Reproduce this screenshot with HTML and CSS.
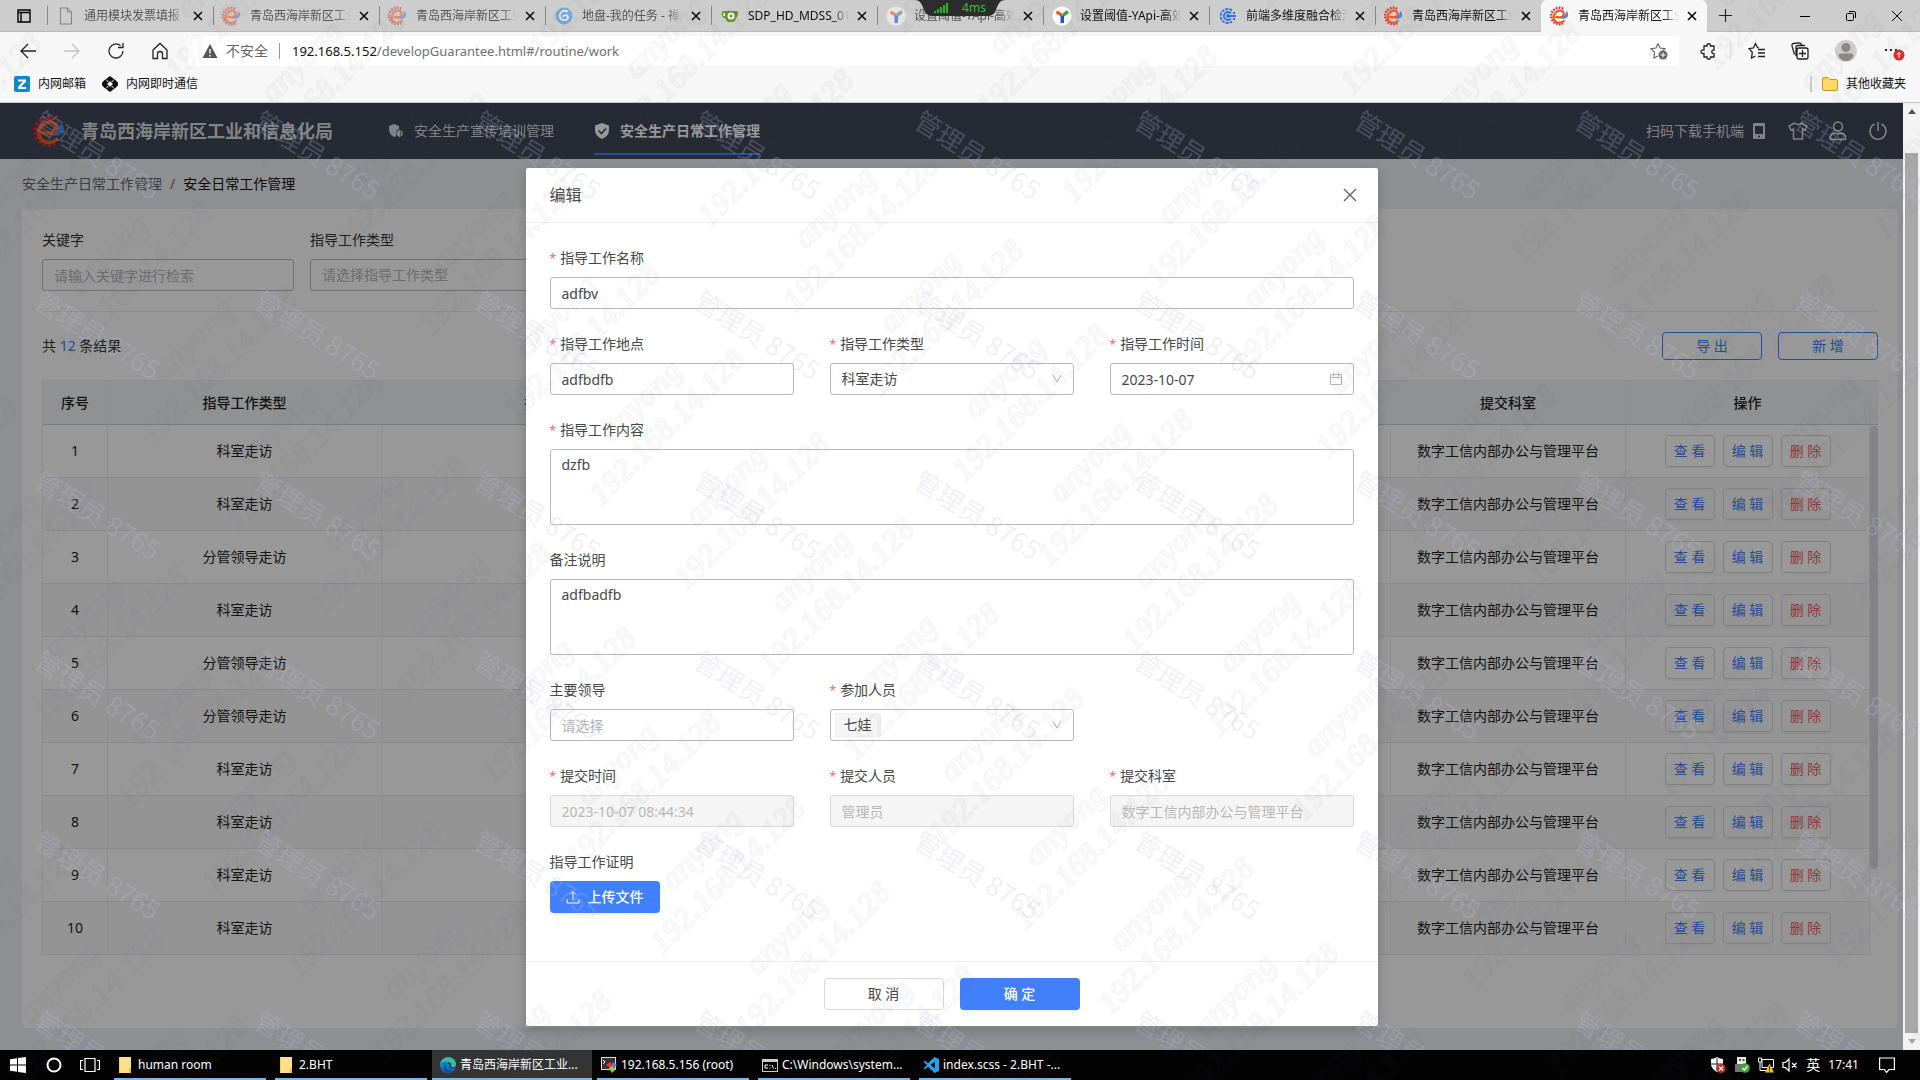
FILE: index.html
```html
<!DOCTYPE html>
<html lang="zh-CN">
<head>
<meta charset="utf-8">
<title>青岛西海岸新区工业和信息化局</title>
<link rel="stylesheet" href="styles.css">
</head>
<body>
<svg class="sprite" aria-hidden="true">
  <symbol id="gear-e" viewBox="0 0 32 32">
    <path d="M21 4.500A13 13 0 1 0 21 27.500" fill="none" stroke="#dc2a33" stroke-width="4" stroke-dasharray="2.600 2"/>
    <path d="M14 18c7 1 11-3 12-10 5 4 4 10-2 12-4 1-8 0-10-2z" fill="#3f8cf0"/>
    <path d="M10 17.500c6 2 12 0 12-4.500 0-5-6-7-11-4-6 4-7 12-2 16 4 3 10 2 13-1" fill="none" stroke="#ee5a26" stroke-width="3.600" stroke-linecap="round"/>
  </symbol>
  <symbol id="yapi" viewBox="0 0 20 20">
    <circle cx="10" cy="10" r="9.500" fill="#fff"/>
    <path d="M9 10.500 3.500 7l2-2.500 5 3.500z" fill="#f4511e"/><path d="m10 8 5-4 2 3-5.500 4z" fill="#43a047"/><path d="M8.500 9.500h3.500V17H8.500z" fill="#1e56c8"/>
  </symbol>
  <symbol id="x" viewBox="0 0 10 10"><path d="m1 1 8 8M9 1 1 9" fill="none" stroke="currentColor" stroke-width="1.700"/></symbol>
  <symbol id="folder" viewBox="0 0 16 16"><path d="M1 0h12v16H1z" fill="#ffe08a"/><path d="M11 11h2v5h-2z" fill="#f0c040"/><path d="M1 0h1v16H1z" fill="#f3cf62"/></symbol>
  <symbol id="down" viewBox="0 0 12 12"><path d="m2 2 4 7 4-7" fill="none" stroke="#b4b4b4"/></symbol>
</svg>

<header class="browser">
  <div class="tabs">
    <button class="tab-menu" aria-label="标签菜单"><svg viewBox="0 0 14 14"><path d="M1 1h12v12H1zM1 3.500h12M4 3.500V13" fill="none" stroke="#000" stroke-width="1.400"/></svg></button>
    <div class="tab dim"><svg viewBox="0 0 20 20"><path d="M4.500 2h7l4 4v12h-11zM11.500 2v4h4" fill="none" stroke="#444"/></svg><span>通用模块发票填报</span><button aria-label="关闭"><svg><use href="#x"/></svg></button></div>
    <div class="tab dim"><svg><use href="#gear-e"/></svg><span>青岛西海岸新区工业和</span><button aria-label="关闭"><svg><use href="#x"/></svg></button></div>
    <div class="tab dim"><svg><use href="#gear-e"/></svg><span>青岛西海岸新区工业和</span><button aria-label="关闭"><svg><use href="#x"/></svg></button></div>
    <div class="tab dim"><svg viewBox="0 0 20 20"><circle cx="10" cy="10" r="8.500" fill="#2a8fe6"/><path d="M14 6c-4-3-9 0-8 5 1 4 7 4 8 1 0-3-4-4-5-1" fill="none" stroke="#fff" stroke-width="1.800"/></svg><span>地盘-我的任务 - 禅道</span><button aria-label="关闭"><svg><use href="#x"/></svg></button></div>
    <div class="tab"><svg viewBox="0 0 20 20"><path d="M3 5h14c2 0 1 6-1 7-1 3-2 4-4 4H9c-2 0-3-2-4-4C1 12 1 6 3 5z" fill="#609926"/><circle cx="11" cy="10" r="3.500" fill="#fff"/><circle cx="11" cy="10" r="1.500" fill="#609926"/><path d="M4 7v3" stroke="#fff" stroke-width="1.500"/></svg><span>SDP_HD_MDSS_01/feat</span><button aria-label="关闭"><svg><use href="#x"/></svg></button></div>
    <div class="tab dim"><svg><use href="#yapi"/></svg><span>设置阈值-YApi-高效</span><button aria-label="关闭"><svg><use href="#x"/></svg></button></div>
    <div class="tab"><svg><use href="#yapi"/></svg><span>设置阈值-YApi-高效</span><button aria-label="关闭"><svg><use href="#x"/></svg></button></div>
    <div class="tab"><svg viewBox="0 0 20 20" fill="none" stroke="#2b6fe8" stroke-width="1.800"><path d="M14 4.500a7 7 0 1 0 0 11" stroke-dasharray="3 1"/><path d="M13 7.500a4 4 0 1 0 0 5M10 10h8M15 7h2M15 13h2"/><circle cx="10" cy="10" r="1" fill="#2b6fe8"/></svg><span>前端多维度融合检测</span><button aria-label="关闭"><svg><use href="#x"/></svg></button></div>
    <div class="tab"><svg><use href="#gear-e"/></svg><span>青岛西海岸新区工业和</span><button aria-label="关闭"><svg><use href="#x"/></svg></button></div>
    <div class="tab active"><svg><use href="#gear-e"/></svg><span>青岛西海岸新区工业和</span><button aria-label="关闭"><svg><use href="#x"/></svg></button></div>
    <button class="new-tab" aria-label="新建标签页"><svg viewBox="0 0 16 16"><path d="M8 1v14M1 8h14" stroke="#222" stroke-width="1.200"/></svg></button>
    <div class="win-buttons">
      <button aria-label="最小化"><svg viewBox="0 0 12 12"><path d="M1 6.500h10" stroke="#000"/></svg></button>
      <button aria-label="还原"><svg viewBox="0 0 12 12" fill="none" stroke="#000"><rect x="1.500" y="3.500" width="7" height="7" rx="1"/><path d="M4 1.500h5q1.500 0 1.500 1.500v5"/></svg></button>
      <button aria-label="关闭窗口"><svg viewBox="0 0 12 12"><path d="m1 1 10 10M11 1 1 11" stroke="#000"/></svg></button>
    </div>
    <div class="ping"><svg class="ping-bg" viewBox="0 0 92 16"><path d="M0 0h92c-7 0-8 5-10 10q-2 6-9 6H19q-7 0-9-6C8 5 7 0 0 0z" fill="#2c2c2c"/></svg><svg class="bars" viewBox="0 0 14 10"><path d="M0 8h2v2H0zM3 6h2v4H3zM6 4h2v6H6zM9 2h2v8H9zM12 0h2v10h-2z" fill="#22b922"/></svg><span>4ms</span></div>
  </div>
  <div class="toolbar">
    <button class="nav-btn" aria-label="后退"><svg viewBox="0 0 18 18"><path d="M17 9H2M9 2 2 9l7 7"/></svg></button>
    <button class="nav-btn off" aria-label="前进"><svg viewBox="0 0 18 18"><path d="M1 9h15M9 2l7 7-7 7"/></svg></button>
    <button class="nav-btn" aria-label="刷新"><svg viewBox="0 0 18 18"><path d="M16 9a7 7 0 1 1-2.500-5.400M16 1v4.500h-5"/></svg></button>
    <button class="nav-btn" aria-label="主页"><svg viewBox="0 0 18 18"><path d="M2 8l7-6.500L16 8v8.500h-4.500V12a2.500 2.500 0 0 0-5 0v4.500H2z"/></svg></button>
    <div class="address">
      <svg class="warn" viewBox="0 0 16 16"><path d="M8 1 15.500 15H.500z" fill="#555"/><path d="M8 6v4.500M8 12v1.500" stroke="#fff" stroke-width="1.500"/></svg>
      <span class="unsafe">不安全</span>
      <span class="url"><b>192.168.5.152</b>/developGuarantee.html#/routine/work</span>
      <button aria-label="收藏"><svg viewBox="0 0 18 18"><path d="m8 1.500 2 4.500 5 .700-3 3M8 1.500 6 6 1 6.700l3.500 3.600L4 16l4-2" fill="none" stroke="#666" stroke-width="1.200"/><circle cx="13" cy="13" r="4.500" fill="#666"/><path d="M13 10.500v5M10.500 13h5" stroke="#fff"/></svg></button>
    </div>
    <div class="tools">
      <button class="nav-btn" aria-label="扩展"><svg viewBox="0 0 18 18"><path d="M5 4h3c-.500-3 4-3 3.500 0H15v4c-3-.500-3 4 0 3.500V15h-3.500c.500 3-4 3-3.500 0H5v-3.500C1 12 1 7.500 5 8z"/></svg></button>
      <button class="nav-btn" aria-label="收藏夹"><svg viewBox="0 0 18 18"><path d="M11 6 9.500 5.500 7.500 1.500 5.500 6 1 6.700l3.300 3.600L3.500 16l4-2M10 7.500h7M10 11h7M10 14.500h7"/></svg></button>
      <button class="nav-btn" aria-label="集锦"><svg viewBox="0 0 18 18"><path d="M3.500 12.500 1 4q-.500-2 1.500-2.500L8 .800q2 0 2.500 2M14 3.500H7q-2 0-2 2V14M8 6h7q2 0 2 2v7q0 2-2 2H8q-2 0-2-2V8q0-2 2-2M11.500 8v7M8 11.500h7"/></svg></button>
      <button class="avatar" aria-label="个人资料"><svg viewBox="0 0 24 24"><circle cx="12" cy="12" r="11" fill="#d2d0ce"/><circle cx="12" cy="8.500" r="4.500" fill="#8a8886"/><path d="M4.500 17q0-2.500 2.500-2.500h10q2.500 0 2.500 2.500-2.500 5-7.500 5t-7.500-5z" fill="#8a8886"/></svg></button>
      <button class="more" aria-label="更多"><svg viewBox="0 0 22 22"><path d="M2 9h2v2H2zM7 9h2v2H7zM12 9h2v2h-2z" fill="#222"/><circle cx="16" cy="15" r="5.500" fill="#d93025"/><path d="M16 18v-5.500M14 14.500l2-2 2 2" fill="none" stroke="#fff"/></svg></button>
    </div>
  </div>
  <nav class="favorites">
    <a href="#mail"><svg viewBox="0 0 16 16"><rect width="16" height="16" rx="2" fill="#0c87c9"/><path d="M4 3.500h8v2L7 11h5v2H4v-2l5-5.500H4z" fill="#fff"/></svg>内网邮箱</a>
    <a href="#im"><svg viewBox="0 0 16 16"><path d="M8 0 12 3 8 6 4 3zM2.500 4.500 6.500 8l-4 3.500L0 9.500v-3zM13.500 4.500 9.500 8l4 3.500L16 9.500v-3zM8 10l4 3-4 3-4-3z" fill="#111"/><path d="M4 3 1.500 5 5 8l-3.500 3L4 13l4-3 4 3 2.500-2L11 8l3.500-3L12 3 8 6z" fill="#111"/><path d="m8 5.500 3 2.500-3 2.500L5 8z" fill="#f7f7f7"/><path d="m4.500 4.500 2 1.500M9.500 10l2 1.500M11.500 4.500l-2 1.500M6.500 10l-2 1.500" stroke="#f7f7f7"/></svg>内网即时通信</a>
    <a href="#other" class="other"><svg viewBox="0 0 16 16"><path d="M.500 3q0-1.500 1.500-1.500h4L8 3.500h6q1.500 0 1.500 1.500v8q0 1.500-1.500 1.500H2Q.500 14.500.500 13z" fill="#ffd968" stroke="#c8971c"/></svg>其他收藏夹</a>
  </nav>
</header>

<div class="viewport">
  <div class="page">
    <header class="site-head">
      <svg class="logo"><use href="#gear-e"/></svg>
      <h1>青岛西海岸新区工业和信息化局</h1>
      <nav>
        <a href="#train"><svg viewBox="0 0 16 16"><path d="M1 3l5-2 5 2v3q-3 1-3 4v3q-1 1-2 1-5-3-5-8z" fill="currentColor"/><path d="M9 9l3-2v7l-3-2zM13.500 8q2 2.500 0 5" fill="currentColor" stroke="currentColor"/></svg>安全生产宣传培训管理</a>
        <a href="#routine" class="on"><svg viewBox="0 0 16 16"><path d="m8 0 7 2.500V8q-1 5.500-7 8-6-2.500-7-8V2.500z" fill="currentColor"/><path d="m4.500 7.500 3 3 4.500-5" fill="none" stroke="#3f4658" stroke-width="1.600"/></svg>安全生产日常工作管理</a>
      </nav>
      <div class="head-tools">
        <a href="#app">扫码下载手机端<svg viewBox="0 0 18 18"><path d="M4 1h10q1 0 1 1v14q0 1-1 1H4q-1 0-1-1V2q0-1 1-1zM5 4v8h8V4z" fill="currentColor" fill-rule="evenodd"/><circle cx="9" cy="14.500" r="1" fill="#3f4658"/></svg></a>
        <button aria-label="主题"><svg viewBox="0 0 20 20"><path d="M6.500 2q3.500 3 7 0L19 5l-2 4-2.500-1v10h-9V8L3 9 1 5z"/></svg></button>
        <button aria-label="用户"><svg viewBox="0 0 20 20"><circle cx="10" cy="5.500" r="4.500"/><path d="M2.500 18.500q-1-5 4-6.500 3.500 1.500 7 0 5 1.500 4 6.500z"/></svg></button>
        <button aria-label="退出"><svg viewBox="0 0 20 20"><path d="M6.500 3a8 8 0 1 0 7 0M10 1v9"/></svg></button>
      </div>
    </header>
    <main>
      <nav class="crumbs"><a href="#routine">安全生产日常工作管理</a><span>/</span><b>安全日常工作管理</b></nav>
      <section class="card">
        <form class="filters">
          <div><label for="kw">关键字</label><input id="kw" class="ctl" placeholder="请输入关键字进行检索"></div>
          <div><label for="ft">指导工作类型</label><select id="ft" class="ctl empty"><option>请选择指导工作类型</option></select></div>
        </form>
        <div class="summary"><p>共 <em>12</em> 条结果</p><button>导 出</button><button>新 增</button></div>
        <div class="table-wrap">
          <table>
            <colgroup><col class="c1"><col class="c2"><col class="c3"><col><col class="c5"><col class="c6"><col class="c7"></colgroup>
            <thead><tr><th>序号</th><th>指导工作类型</th><th>指导工作名称</th><th></th><th>提交科室</th><th>操作</th><th></th></tr></thead>
            <tbody>
              <tr><td>1</td><td>科室走访</td><td></td><td></td><td>数字工信内部办公与管理平台</td><td><button>查 看</button><button>编 辑</button><button class="del">删 除</button></td><td></td></tr>
              <tr><td>2</td><td>科室走访</td><td></td><td></td><td>数字工信内部办公与管理平台</td><td><button>查 看</button><button>编 辑</button><button class="del">删 除</button></td><td></td></tr>
              <tr><td>3</td><td>分管领导走访</td><td></td><td></td><td>数字工信内部办公与管理平台</td><td><button>查 看</button><button>编 辑</button><button class="del">删 除</button></td><td></td></tr>
              <tr><td>4</td><td>科室走访</td><td></td><td></td><td>数字工信内部办公与管理平台</td><td><button>查 看</button><button>编 辑</button><button class="del">删 除</button></td><td></td></tr>
              <tr><td>5</td><td>分管领导走访</td><td></td><td></td><td>数字工信内部办公与管理平台</td><td><button>查 看</button><button>编 辑</button><button class="del">删 除</button></td><td></td></tr>
              <tr><td>6</td><td>分管领导走访</td><td></td><td></td><td>数字工信内部办公与管理平台</td><td><button>查 看</button><button>编 辑</button><button class="del">删 除</button></td><td></td></tr>
              <tr><td>7</td><td>科室走访</td><td></td><td></td><td>数字工信内部办公与管理平台</td><td><button>查 看</button><button>编 辑</button><button class="del">删 除</button></td><td></td></tr>
              <tr><td>8</td><td>科室走访</td><td></td><td></td><td>数字工信内部办公与管理平台</td><td><button>查 看</button><button>编 辑</button><button class="del">删 除</button></td><td></td></tr>
              <tr><td>9</td><td>科室走访</td><td></td><td></td><td>数字工信内部办公与管理平台</td><td><button>查 看</button><button>编 辑</button><button class="del">删 除</button></td><td></td></tr>
              <tr><td>10</td><td>科室走访</td><td></td><td></td><td>数字工信内部办公与管理平台</td><td><button>查 看</button><button>编 辑</button><button class="del">删 除</button></td><td></td></tr>
            </tbody>
          </table>
        </div>
      </section>
    </main>
    <div class="mask">
      <form class="modal" role="dialog" aria-labelledby="mt">
        <header><h2 id="mt">编辑</h2><button type="button" aria-label="关闭"><svg viewBox="0 0 14 14"><path d="m1 1 12 12M13 1 1 13" stroke="#666" stroke-width="1.400"/></svg></button></header>
        <div class="fields">
          <div class="wide"><label class="req" for="f1">指导工作名称</label><input id="f1" class="ctl" value="adfbv"></div>
          <div><label class="req" for="f2">指导工作地点</label><input id="f2" class="ctl" value="adfbdfb"></div>
          <div><label class="req" for="f3">指导工作类型</label><span class="box"><select id="f3" class="ctl"><option>科室走访</option></select><svg><use href="#down"/></svg></span></div>
          <div><label class="req" for="f4">指导工作时间</label><span class="box"><input id="f4" class="ctl" value="2023-10-07"><svg class="cal" viewBox="0 0 14 14"><path d="M1.500 2.500h11v10h-11zM1.500 5.500h11M4.500.500v4M9.500.500v4" fill="none" stroke="#b4b4b4"/></svg></span></div>
          <div class="wide"><label class="req" for="f5">指导工作内容</label><textarea id="f5" class="ctl">dzfb</textarea></div>
          <div class="wide"><label for="f6">备注说明</label><textarea id="f6" class="ctl">adfbadfb</textarea></div>
          <div><label for="f7">主要领导</label><input id="f7" class="ctl" placeholder="请选择"></div>
          <div><label class="req" for="f8">参加人员</label><span class="box"><button type="button" id="f8" class="ctl multi"><span class="tag">七娃</span></button><svg><use href="#down"/></svg></span></div>
          <div class="new-row"><label class="req" for="f9">提交时间</label><input id="f9" class="ctl" value="2023-10-07 08:44:34" disabled></div>
          <div><label class="req" for="f10">提交人员</label><input id="f10" class="ctl" value="管理员" disabled></div>
          <div><label class="req" for="f11">提交科室</label><input id="f11" class="ctl" value="数字工信内部办公与管理平台" disabled></div>
          <div class="wide"><label for="f12">指导工作证明</label><button type="button" id="f12" class="primary upload"><svg viewBox="0 0 14 14"><path d="M1 9v4h12V9M7 10V2M4 4.500l3-3 3 3" fill="none" stroke="#fff"/></svg>上传文件</button></div>
        </div>
        <footer><button type="button" class="cancel">取 消</button><button type="button" class="primary">确 定</button></footer>
      </form>
    </div>
  </div>
  <div class="scrollbar"><svg viewBox="0 0 8 5"><path d="M0 5h8L4 0z" fill="#505050"/></svg><i></i><svg viewBox="0 0 8 5"><path d="M0 0h8L4 5z" fill="#a3a3a3"/></svg></div>
  <svg class="mark" aria-hidden="true">
    <defs><pattern id="wm-user" x="-13" y="-37" width="220" height="180" patternUnits="userSpaceOnUse"><text class="wm-user" x="110" y="99" transform="rotate(32 110 90)">管理员 8765</text></pattern></defs>
    <rect width="100%" height="100%" fill="url(#wm-user)"/>
  </svg>
</div>

<footer class="taskbar">
  <button aria-label="开始"><svg viewBox="0 0 16 16"><path d="M0 2.300 7 1.300v6.200H0zM8 1.100 16 0v7.500H8zM0 8.500h7v6.200l-7-1zM8 8.500h8V16l-8-1.100z" fill="#fff"/></svg></button>
  <button aria-label="搜索"><svg viewBox="0 0 16 16"><circle cx="8" cy="8" r="6.500" fill="none" stroke="#fff" stroke-width="2"/></svg></button>
  <button aria-label="任务视图" class="view"><svg viewBox="0 0 20 16"><path d="M5 1.500h10v13H5zM3 3.500H.500v9H3M17 3.500h2.500v9H17" fill="none" stroke="#fff" stroke-width="1.200"/></svg></button>
  <button class="task"><svg><use href="#folder"/></svg>human room</button>
  <button class="task"><svg><use href="#folder"/></svg>2.BHT</button>
  <button class="task current"><svg viewBox="0 0 16 16"><circle cx="8" cy="8" r="8" fill="#1479cf"/><path d="M0 8C1 1 8-1 12 1c5 3 5 9 1 10-3 0-3-1-3-3 0-4-7-5-10 0z" fill="#35c1a0"/><path d="M6 7q-2 6 7 6-3 4-8 2-4-4 1-8z" fill="#0b4f9c"/><path d="M8 6q4 0 2 4 2 2 5 0" fill="none" stroke="#333" stroke-width="1.500"/></svg>青岛西海岸新区工业...</button>
  <button class="task"><svg viewBox="0 0 16 16"><rect x=".5" y=".5" width="14" height="12" fill="#333" stroke="#ddd"/><path d="m2 3 2 2-2 2" fill="none" stroke="#fff"/><path d="m9 5 3 3-3 3-4-3z" fill="#e33"/><path d="m12 5 4 3-4 3-1-3z" fill="#4285f4"/><path d="m8 11 3-2 4 3-4 4z" fill="#9c3"/></svg>192.168.5.156 (root)</button>
  <button class="task"><svg viewBox="0 0 16 16"><rect x=".5" y="2.500" width="15" height="12" fill="#000" stroke="#ccc"/><path d="M1 4h14" stroke="#ccc" stroke-width="2"/><path d="M6 8H3v3h3M8 8v1M8 10.500v1M10 8l1.500 3.500M13 11.500h1" fill="none" stroke="#fff"/></svg>C:\Windows\system...</button>
  <button class="task"><svg viewBox="0 0 16 16"><path d="m11.500 0 4.500 2v12l-4.500 2L5 9.800l-3 2.400L.500 11.500 4 8 .500 4.500 2 3.800l3 2.400zM12 4.500 7.500 8l4.500 3.500z" fill="#23a3ee" fill-rule="evenodd"/></svg>index.scss - 2.BHT -...</button>
  <div class="tray">
    <svg viewBox="0 0 16 16"><path d="M7 0q3 2 6 2v6q-1 4-6 7-5-3-6-7V2q3 0 6-2z" fill="#fff"/><path d="M7 1v13M1 7h12" stroke="#222"/><circle cx="11" cy="11.500" r="4.500" fill="#d8202c"/><path d="m9 9.500 4 4M13 9.500l-4 4" stroke="#fff" stroke-width="1.300"/></svg>
    <svg viewBox="0 0 16 16"><path d="M3 0h9v7H3z" fill="#eee"/><path d="M5 2h2v2H5zM8.500 2h2v2h-2z" fill="#555"/><path d="M1 7h12v8H1z" fill="#777"/><circle cx="11" cy="11" r="4.800" fill="#35a835"/><path d="m8.500 11 2 2 3-4" fill="none" stroke="#fff" stroke-width="1.500"/></svg>
    <svg viewBox="0 0 16 16"><path d="M4 2.500h11.500v8H4zM.500 1v4h3V1zM2 5v8.500h6" fill="none" stroke="#fff"/><path d="m11.500 6.500 4.500 9H7z" fill="#ffc20e"/><path d="M11.500 9.500v3M11.500 13.500v1" stroke="#000"/></svg>
    <svg viewBox="0 0 16 16"><path d="M1 5.500h2.500L7 2v12l-3.500-3.500H1zM10 6l4.500 4.500M14.500 6 10 10.500" fill="none" stroke="#fff" stroke-width="1.200"/></svg>
    <span>英</span><time>17:41</time>
    <svg class="note" viewBox="0 0 16 16"><path d="M.600 1h14.800v11.500H10L7.500 15.500 5.500 12.500H.600z" fill="none" stroke="#fff" stroke-width="1.200"/></svg>
  </div>
</footer>

<svg class="mark" aria-hidden="true">
  <defs><pattern id="wm-host" width="274" height="120" patternUnits="userSpaceOnUse" patternTransform="rotate(-45)"><text class="wm-host" x="170" y="27">anyong</text><text class="wm-host" x="170" y="64">192.168.14.128</text></pattern></defs>
  <rect width="100%" height="100%" fill="url(#wm-host)"/>
</svg>
</body>
</html>
```
FILE: styles.css
```css
* { box-sizing: border-box; }
body {
  margin: 0;
  min-height: 100vh;
  display: flex;
  flex-direction: column;
  position: relative;
  overflow-x: hidden;
  font: 14px/22px "Noto Sans", "Noto Sans CJK SC", sans-serif;
  color: #333;
}
button, input, select, textarea { font: inherit; color: inherit; margin: 0; }
button { background: none; border: 0; padding: 0; }
a { color: inherit; text-decoration: none; }
h1, h2, p { margin: 0; font-weight: 400; }
svg { flex: none; display: block; }
.sprite { position: absolute; width: 0; height: 0; }

/* browser chrome */
.browser { background: #f7f7f7; border-bottom: 1px solid #c4c4c4; font-size: 12px; color: #111; }
.tabs { position: relative; height: 32px; display: flex; align-items: stretch; background: #cdcdcd; border-bottom: 1px solid #b8b8b8; }
.tab-menu { width: 47px; display: grid; place-items: center; }
.tab-menu svg { width: 14px; height: 14px; }
.tab { flex: 0 1 166px; min-width: 0; display: flex; align-items: center; gap: 8px; padding: 0 10px 0 8px; border-left: 1px solid #8a8a8a; border-image: linear-gradient(transparent 20%, #888 20%, #888 80%, transparent 80%) 1; }
.tab svg { width: 20px; height: 20px; }
.tab span { flex: 1; overflow: hidden; white-space: nowrap; mask-image: linear-gradient(90deg, #000 84%, transparent); }
.tab button svg { width: 10px; height: 10px; }
.tab.dim > svg { opacity: .55; }
.tab.dim span { color: #555; }
.tab.active { background: #f7f7f7; border: 0; border-image: none; border-radius: 6px 6px 0 0; padding-left: 9px; margin-bottom: -1px; }
.new-tab { width: 36px; display: grid; place-items: center; }
.new-tab svg { width: 15px; height: 15px; }
.win-buttons { margin-left: auto; display: flex; }
.win-buttons button { width: 46px; display: grid; place-items: center; }
.win-buttons svg { width: 12px; height: 12px; }
.ping { position: absolute; left: 50%; top: 0; width: 92px; height: 16px; margin-left: -46px; display: flex; align-items: center; justify-content: center; gap: 14px; color: #2bc52b; line-height: 16px; }
.ping-bg { position: absolute; inset: 0; width: 92px; height: 16px; }
.ping .bars, .ping span { position: relative; }
.bars { width: 14px; height: 10px; }
.toolbar { height: 38px; display: flex; align-items: center; padding: 0 8px 0 6px; }
.nav-btn { width: 44px; display: grid; place-items: center; }
.nav-btn svg { width: 18px; height: 18px; fill: none; stroke: #222; stroke-width: 1.3; }
.nav-btn.off svg { stroke: #c4c4c4; }
.address { flex: 1; height: 30px; margin-left: 6px; display: flex; align-items: center; gap: 8px; padding: 0 11px 0 14px; background: #fff; border-radius: 4px; font-size: 14px; color: #666; }
.address svg { width: 18px; height: 18px; }
.address .warn { width: 16px; height: 16px; }
.unsafe { padding-right: 11px; border-right: 1px solid #999; line-height: 16px; }
.url { flex: 1; padding-left: 4px; font-size: 13px; color: #707070; }
.url b { font-weight: 400; color: #111; }
.tools { display: flex; align-items: center; margin-left: 6px; }
.tools .nav-btn { width: 34px; }
.tools .nav-btn:first-child { width: 46px; border-right: 1px solid #ddd; }
.tools .nav-btn:nth-child(2) { width: 52px; }
.avatar { width: 58px; display: grid; place-items: center; }
.avatar svg { width: 24px; height: 24px; }
.more { width: 37px; padding-left: 8px; }
.more svg { width: 22px; height: 22px; }
.favorites { height: 32px; display: flex; align-items: center; gap: 16px; padding: 0 14px 4px; }
.favorites a { display: flex; align-items: center; gap: 8px; }
.favorites svg { width: 16px; height: 16px; }
.favorites .other { margin-left: auto; padding-left: 10px; border-left: 2px solid #ccc; line-height: 16px; }

/* page */
.viewport { flex: 1; display: flex; position: relative; }
.page { flex: 1; min-width: 0; position: relative; display: flex; flex-direction: column; background: #edeef4; }
.site-head { height: 56px; display: flex; align-items: center; background: #3f4658; color: #d8dade; padding: 0 15px 0 33px; }
.logo { width: 34px; height: 34px; }
.site-head h1 { margin-left: 14px; font-size: 18px; font-weight: 700; white-space: nowrap; }
.site-head nav { display: flex; gap: 40px; margin-left: 55px; align-self: stretch; }
.site-head nav a { display: flex; align-items: center; gap: 10px; padding-top: 6px; border-bottom: 2px solid transparent; margin-bottom: 4px; white-space: nowrap; }
.site-head nav svg { width: 16px; height: 16px; }
.site-head nav .on { font-weight: 700; color: #fff; border-color: #4080ff; }
.head-tools { margin-left: auto; display: flex; align-items: center; gap: 20px; }
.head-tools a { display: flex; align-items: center; gap: 6px; white-space: nowrap; }
.head-tools svg { width: 18px; height: 18px; }
.head-tools button svg { width: 20px; height: 20px; fill: none; stroke: currentColor; stroke-width: 1.5; }
main { flex: 1; display: flex; flex-direction: column; padding: 14px 5px 22px 22px; }
.crumbs { display: flex; gap: 8px; margin-bottom: 14px; color: #666; }
.crumbs b { font-weight: 400; color: #111; }
.card { flex: 1; padding: 20px; background: #fdfdfe; border-radius: 4px; }
.filters { display: flex; gap: 16px; padding-bottom: 20px; border-bottom: 1px solid #ececec; }
.filters > div { flex: 0 0 252px; }
label { display: block; height: 22px; margin-bottom: 8px; }
.ctl { display: block; width: 100%; height: 32px; padding: 4px 11px; border: 1px solid #b9b9bb; border-radius: 3px; background: #fff; appearance: none; outline: 0; }
.ctl::placeholder, .ctl.empty { color: #b4b4b6; }
.filters .ctl { background: #fdfdfe; }
.summary { display: flex; align-items: center; gap: 16px; padding: 20px 0; }
.summary p { flex: 1; }
.summary em { font-style: normal; color: #4080ff; }
.summary button { width: 100px; height: 28px; border: 1px solid #4080ff; border-radius: 4px; color: #4080ff; line-height: 20px; }
.table-wrap { position: relative; }
.table-wrap::after { content: ""; position: absolute; right: 0; top: 46px; width: 8px; height: 443px; border-radius: 4px; background: #dadce6; }
table { width: 100%; table-layout: fixed; border-collapse: separate; border-spacing: 0; border-left: 1px solid #e9e9ec; border-top: 1px solid #e9e9ec; }
.c1 { width: 65px; } .c2 { width: 274px; } .c3 { width: 370px; } .c5 { width: 235px; } .c6 { width: 244px; } .c7 { width: 8px; }
th, td { padding: 0; text-align: center; border-right: 1px solid #ebebed; border-bottom: 1px solid #e6e6e8; color: #222; }
th { height: 44px; font-weight: 500; background: #f1f2f4; border-bottom-color: #cccdd0; }
td { height: 53px; }
th:last-child, td:last-child { border-right: 0; }
td:last-child { border-bottom: 0; background: #fdfdfe; }
tbody tr:nth-child(even) { background: #f7f7f9; }
td button { width: 50px; height: 32px; border: 1px solid #d6d6d9; border-radius: 4px; color: #4080ff; box-shadow: 0 2px 0 rgba(0, 0, 0, .03); }
td button + button { margin-left: 8px; }
td .del { color: #f06060; }

/* dialog */
.mask { position: absolute; inset: 0; display: flex; justify-content: center; align-items: flex-start; padding: 65px 0 24px; background: rgba(0, 0, 0, .4); }
.modal { width: 852px; max-width: 92%; background: #fff; border-radius: 2px; box-shadow: 0 4px 12px rgba(0, 0, 0, .2); color: #484848; }
.modal > header { display: flex; justify-content: space-between; align-items: center; height: 55px; padding: 0 21px 0 24px; border-bottom: 1px solid #ececee; }
.modal h2 { font-size: 16px; }
.modal header svg { width: 14px; height: 14px; }
.fields { display: grid; grid-template-columns: repeat(3, 1fr); gap: 24px 36px; padding: 24px 24px 48px; }
.wide { grid-column: 1 / -1; }
.new-row { grid-column-start: 1; }
.req::before { content: "*"; margin-right: 4px; color: #f56c6c; font-size: 12px; }
textarea.ctl { height: 76px; resize: none; }
.ctl:disabled { background: #f5f5f5; border-color: #d9d9d9; color: #b8b8b8; }
.box { display: block; position: relative; }
.box svg { position: absolute; right: 11px; top: 10px; width: 12px; height: 12px; }
.box .cal { top: 9px; width: 14px; height: 14px; }
.multi { padding: 0 4px; text-align: left; }
.tag { display: inline-block; padding: 0 8px; line-height: 24px; background: #f5f5f5; border: 1px solid #f0f0f0; border-radius: 2px; }
.multi .tag { line-height: 22px; }
.primary { height: 32px; border-radius: 4px; background: #4080fb; color: #fff; font-weight: 500; box-shadow: 0 2px 0 rgba(0, 0, 0, .05); }
.upload { display: flex; align-items: center; gap: 8px; padding: 0 16px; }
.upload svg { width: 14px; height: 14px; }
.modal footer { display: flex; justify-content: center; gap: 16px; padding: 16px; border-top: 1px solid #ececee; }
.modal footer button { width: 120px; }
.cancel { height: 32px; border: 1px solid #d9d9d9; border-radius: 4px; background: #fff; }

.scrollbar { width: 17px; display: flex; flex-direction: column; align-items: center; justify-content: space-between; padding: 6px 0; background: #f3f3f3; }
.scrollbar svg { width: 8px; height: 5px; }
.scrollbar i { flex: 1; width: 13px; margin: 39px 0 6px; background: #a8a8a8; }

/* taskbar */
.taskbar { height: 30px; display: flex; align-items: stretch; gap: 1px; background: #030304; color: #fff; font-size: 12px; }
.taskbar > button { width: 35px; display: flex; align-items: center; justify-content: center; }
.taskbar svg { width: 16px; height: 16px; }
.taskbar > .view { margin-right: 2px; }
.taskbar .view svg { width: 20px; }
.taskbar > .task { flex: 0 1 160px; justify-content: flex-start; gap: 4px; padding: 0 8px; white-space: nowrap; overflow: hidden; background: linear-gradient(#76b9ed, #76b9ed) center bottom / 152px 2px no-repeat; }
.taskbar > .current { background-color: #343434; background-size: 100% 2px; }
.tray { margin-left: auto; display: flex; align-items: center; gap: 8px; padding-right: 25px; }
.tray span { font-size: 14px; }
.tray .note { margin-left: 12px; }

/* watermarks */
.mark { position: absolute; inset: 0; width: 100%; height: 100%; pointer-events: none; }
.wm-user { font: 26px "Noto Sans CJK SC", sans-serif; fill: rgba(190, 190, 225, .24); text-anchor: middle; }
.wm-host { font: italic bold 33px "Liberation Serif", serif; fill: rgba(50, 50, 90, .03); stroke: rgba(50, 50, 90, .04); text-anchor: middle; }
```
